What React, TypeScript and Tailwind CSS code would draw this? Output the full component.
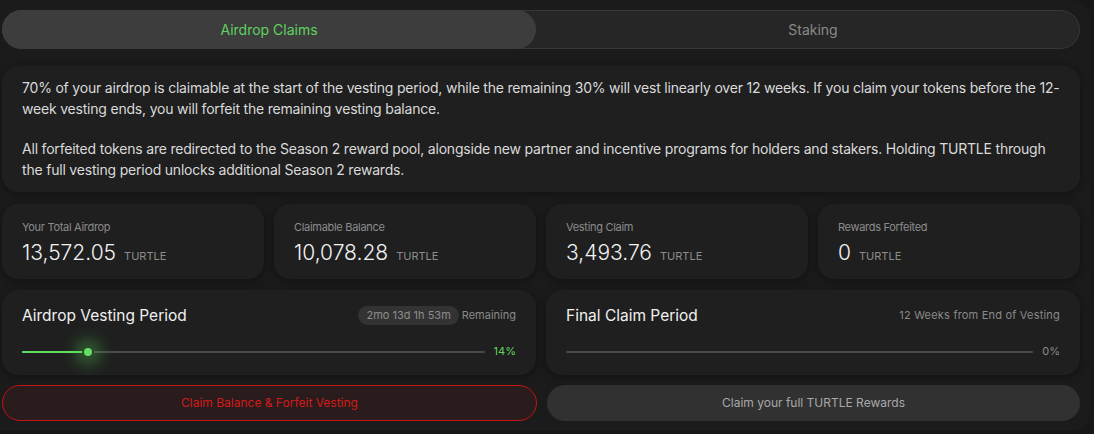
import { useState } from 'react'

const stats = [
  { label: 'Your Total Airdrop', value: '13,572.05' },
  { label: 'Claimable Balance', value: '10,078.28' },
  { label: 'Vesting Claim', value: '3,493.76' },
  { label: 'Rewards Forfeited', value: '0' },
]

function StatCard({ label, value }: { label: string; value: string }) {
  return (
    <div className="flex-1 h-[75px] rounded-[16px] bg-[#1f1f1f] shadow-[0_2px_8px_rgba(0,0,0,0.35)] pl-5 pt-[15px]">
      <div className="text-[11px] leading-4 tracking-[-0.3px] text-[#8c8c8c]">{label}</div>
      <div className="flex items-baseline gap-2 mt-[4px]">
        <span className="text-[21px] leading-7 font-light text-[#f2f2f2]">{value}</span>
        <span className="text-[11px] text-[#8c8c8c]">TURTLE</span>
      </div>
    </div>
  )
}

function Track({ pct, color }: { pct: number; color: string }) {
  return (
    <div className="relative flex-1 h-[2px] bg-[#4a4a4a] rounded-full">
      {pct > 0 && (
        <>
          <div className="absolute left-0 top-0 h-[2px] rounded-full" style={{ width: `${pct}%`, background: color }} />
          <div
            className="absolute top-1/2 -translate-y-1/2 -translate-x-1/2 w-[12px] h-[12px] rounded-full bg-[#2b4a2b] flex items-center justify-center shadow-[0_0_16px_6px_rgba(90,220,90,0.4)]"
            style={{ left: `${pct}%` }}
          >
            <div className="w-[8px] h-[8px] rounded-full bg-[#62e062]" />
          </div>
        </>
      )}
    </div>
  )
}

export default function App() {
  const [tab, setTab] = useState<'claims' | 'staking'>('claims')

  return (
    <div className="w-[1094px] h-[434px] overflow-hidden bg-[#171717] font-['Inter',sans-serif]">
      <div className="w-[1090px] h-[431px] bg-[#1b1b1b] rounded-tr-[18px] rounded-br-[18px] pl-[2px] pr-[10px] pt-[10px]">
        {/* Tabs */}
        <div className="flex h-[39px] rounded-full bg-[#262626] border border-[#383838] text-[14px]">
          <button
            onClick={() => setTab('claims')}
            className={`w-[534px] -m-px rounded-full ${tab === 'claims' ? 'bg-[#3d3d3d] text-[#5fd35f]' : 'text-[#8a8a8a]'}`}
          >
            Airdrop Claims
          </button>
          <button
            onClick={() => setTab('staking')}
            className={`flex-1 pl-3 rounded-full ${tab === 'staking' ? 'bg-[#3d3d3d] text-[#5fd35f]' : 'text-[#8a8a8a]'}`}
          >
            Staking
          </button>
        </div>

        {/* Info */}
        <div className="mt-[17px] rounded-[16px] bg-[#1f1f1f] shadow-[0_2px_8px_rgba(0,0,0,0.35)] px-5 py-3 text-[14px] leading-[20.5px] tracking-[-0.2px] text-[#dadada]">
          <p>
            70% of your airdrop is claimable at the start of the vesting period, while the remaining 30% will vest linearly over 12 weeks. If you claim your tokens before the 12-week vesting ends, you will forfeit the remaining vesting balance.
          </p>
          <p className="mt-[20px]">
            All forfeited tokens are redirected to the Season 2 reward pool, alongside new partner and incentive programs for holders and stakers. Holding TURTLE through the full vesting period unlocks additional Season 2 rewards.
          </p>
        </div>

        {/* Stats */}
        <div className="mt-3 flex gap-[10px]">
          {stats.map((s) => (
            <StatCard key={s.label} {...s} />
          ))}
        </div>

        {/* Periods */}
        <div className="mt-[11px] flex gap-[10px]">
          <div className="flex-1 h-[85px] rounded-[16px] bg-[#1f1f1f] shadow-[0_2px_8px_rgba(0,0,0,0.35)] px-5 pt-[14px]">
            <div className="flex items-center justify-between">
              <span className="text-[15.5px] text-[#f0f0f0]">Airdrop Vesting Period</span>
              <div className="flex items-center gap-[3px] text-[11px]">
                <span className="rounded-full bg-[#333333] px-2 py-[1px] text-[#8e8e8e]">2mo 13d 1h 53m</span>
                <span className="text-[#8a8a8a]">Remaining</span>
              </div>
            </div>
            <div className="mt-[16px] flex items-center gap-[9px]">
              <Track pct={14.3} color="#62e062" />
              <span className="text-[11px] text-[#5fd35f]">14%</span>
            </div>
          </div>
          <div className="flex-1 h-[85px] rounded-[16px] bg-[#1f1f1f] shadow-[0_2px_8px_rgba(0,0,0,0.35)] px-5 pt-[14px]">
            <div className="flex items-center justify-between">
              <span className="text-[15.5px] text-[#f0f0f0]">Final Claim Period</span>
              <span className="text-[11px] tracking-[0.2px] text-[#8a8a8a]">12 Weeks from End of Vesting</span>
            </div>
            <div className="mt-[16px] flex items-center gap-[9px]">
              <Track pct={0} color="#62e062" />
              <span className="text-[11px] text-[#8a8a8a]">0%</span>
            </div>
          </div>
        </div>

        {/* Actions */}
        <div className="mt-[10px] flex gap-[10px] text-[12px]">
          <button className="flex-1 h-[36px] rounded-full border border-[#c41414] bg-[#2a1c1c] text-[#d41a1a]">
            Claim Balance &amp; Forfeit Vesting
          </button>
          <button className="flex-1 h-[36px] rounded-full bg-[#313131] text-[#a8a8a8]">
            Claim your full TURTLE Rewards
          </button>
        </div>
      </div>
    </div>
  )
}
